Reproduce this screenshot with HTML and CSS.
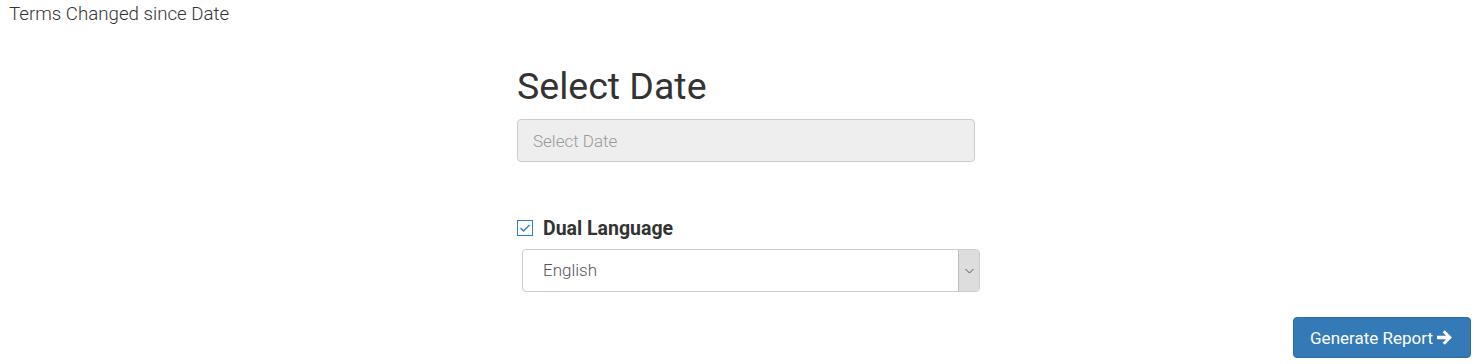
FILE: index.html
```html
<!DOCTYPE html>
<html lang="en">
<head>
    <meta charset="UTF-8">
    <meta name="viewport" content="width=device-width, initial-scale=1.0">
    <title>Terms Changed since Date</title>
    <link rel="stylesheet" href="styles.css">
</head>
<body>
    <div class="pageTitle">Terms Changed since Date</div>
    <div class="form">
        <h1>Select Date</h1>
        <input type="text" class="dateInp" placeholder="Select Date" disabled>
        <div class="dual">
            <span class="check">
                <svg width="12" height="10" viewBox="0 0 12 10"><path d="M1.5 5 L4.5 8 L10.5 2" fill="none" stroke="#2a7fd4" stroke-width="1.4"/></svg>
            </span>
            <label>Dual Language</label>
        </div>
        <div class="select">
            <span class="selText">English</span>
            <span class="selBtn">
                <svg width="9" height="6" viewBox="0 0 9 6"><path d="M0.5 1 L4.5 5 L8.5 1" fill="none" stroke="#555" stroke-width="1"/></svg>
            </span>
        </div>
    </div>
    <div class="actions">
        <button class="genBtn">Generate Report
            <svg width="18" height="17" viewBox="0 0 17 16"><path d="M1 6.3 H9.5 L6.3 3.1 L8.3 1.1 L15 8 L8.3 14.9 L6.3 12.9 L9.5 9.7 H1 Z" fill="#fff"/></svg>
        </button>
    </div>
</body>
</html>
```
FILE: styles.css
```css
body{
    margin: 0;
    font-family: Roboto, "Liberation Sans", sans-serif;
    color: #333;
    background: #fff;
}
.pageTitle{
    font-size: 18.7px;
    font-weight: 300;
    padding: 3px 0 0 9px;
    line-height: 22px;
}
.form{
    width: 458px;
    margin-left: 517px;
    margin-top: 36px;
}
h1{
    font-size: 37.5px;
    font-weight: 400;
    margin: 0;
    line-height: 50px;
}
.dateInp{
    display: block;
    box-sizing: border-box;
    width: 458px;
    height: 43px;
    margin-top: 8px;
    padding: 0 15px;
    font-family: inherit;
    font-size: 17px;
    font-weight: 300;
    background: #eee;
    border: 1px solid #ccc;
    border-radius: 4px;
    color: #999;
}
.dateInp::placeholder{
    color: #999;
}
.dual{
    display: flex;
    align-items: center;
    margin-top: 56px;
    height: 20px;
}
.check{
    box-sizing: border-box;
    width: 16px;
    height: 16px;
    border: 1.5px solid #2a7fd4;
    display: flex;
    align-items: center;
    justify-content: center;
}
.dual label{
    font-size: 19.5px;
    font-weight: 700;
    margin-left: 10px;
}
.select{
    display: flex;
    box-sizing: border-box;
    width: 458px;
    height: 43px;
    margin: 11px 0 0 5px;
    border: 1px solid #ccc;
    border-radius: 4px;
    overflow: hidden;
}
.selText{
    flex: 1;
    padding-left: 20px;
    font-size: 17px;
    font-weight: 300;
    color: #555;
    line-height: 41px;
}
.selBtn{
    width: 20px;
    background: #ddd;
    border-left: 1px solid #bbb;
    display: flex;
    align-items: center;
    justify-content: center;
}
.actions{
    display: flex;
    justify-content: flex-end;
    padding: 25px 6px 0 0;
}
.genBtn{
    display: flex;
    align-items: center;
    gap: 3px;
    height: 41px;
    width: 178px;
    justify-content: center;
    background: #337ab7;
    border: 1px solid #2e6da4;
    border-radius: 4px;
    color: #fff;
    font-family: inherit;
    font-size: 17px;
}
```
